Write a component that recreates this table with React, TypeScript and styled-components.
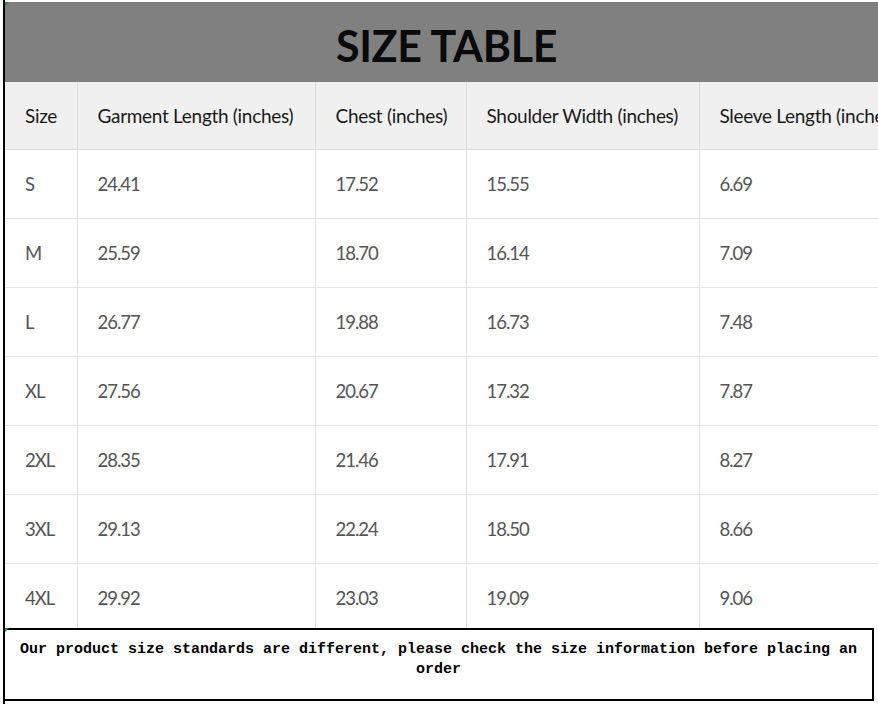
import React from 'react'
import styled, { createGlobalStyle } from 'styled-components'

const GlobalStyle = createGlobalStyle`
  html, body {
    margin: 0;
    padding: 0;
    background: #fff;
  }
`

const cellFont = `Lato, "Liberation Sans", sans-serif`

const Page = styled.div`
  width: 878px;
  height: 704px;
  overflow: hidden;
  background: #fff;
`

const Sheet = styled.div`
  position: relative;
  margin-left: 3px;
  height: 704px;
  padding-top: 2px;
  box-sizing: border-box;
  border-left: 2px solid #000;
  display: flex;
  flex-direction: column;
`

const Marker = styled.span<{ $top: number }>`
  position: absolute;
  left: 0;
  top: ${(p) => p.$top}px;
  width: 0;
  height: 0;
  border-top: 4px solid #2e8b2e;
  border-right: 4px solid transparent;
`

const TitleBar = styled.div`
  height: 80px;
  flex: none;
  background: #808080;
  display: flex;
  align-items: center;
  justify-content: center;
  padding: 6px 0 0 10px;
  box-sizing: border-box;
`

const Title = styled.h1`
  margin: 0;
  font-family: ${cellFont};
  font-weight: 700;
  font-size: 43px;
  letter-spacing: -0.3px;
  color: #0a0a0a;
`

const TableWrap = styled.div`
  height: 546px;
  flex: none;
  overflow: hidden;
`

const Table = styled.table`
  border-collapse: collapse;
  table-layout: fixed;
  width: 945px;
`

const HeadRow = styled.tr`
  height: 67px;
  background: #f0f0f0;
`

const Row = styled.tr`
  height: 69px;
  background: #fff;
`

const Th = styled.th`
  padding: 0 0 0 20px;
  text-align: left;
  white-space: nowrap;
  overflow: hidden;
  font-family: ${cellFont};
  font-weight: 400;
  font-size: 19px;
  letter-spacing: -0.3px;
  color: #1a1a1a;
  border-right: 1px solid #dcdcdc;
  border-bottom: 1px solid #dedede;
`

const Td = styled.td`
  padding: 0 0 0 20px;
  text-align: left;
  white-space: nowrap;
  font-family: ${cellFont};
  font-size: 18.5px;
  letter-spacing: -1px;
  color: #545454;
  border-right: 1px solid #e2e2e2;
  border-bottom: 1px solid #e4e4e4;
`

const Footer = styled.div`
  width: 871px;
  height: 73px;
  flex: none;
  margin-left: -2px;
  box-sizing: border-box;
  border: 2px solid #000;
  padding: 10px 10px 0;
  text-align: center;
  font-family: "Liberation Mono", "DejaVu Sans Mono", monospace;
  font-weight: 700;
  font-size: 15px;
  line-height: 20px;
  color: #000;
`

const columns = [
  { label: 'Size', width: 72 },
  { label: 'Garment Length (inches)', width: 238 },
  { label: 'Chest (inches)', width: 151 },
  { label: 'Shoulder Width (inches)', width: 233 },
  { label: 'Sleeve Length (inches)', width: 251 },
]

const rows = [
  ['S', '24.41', '17.52', '15.55', '6.69'],
  ['M', '25.59', '18.70', '16.14', '7.09'],
  ['L', '26.77', '19.88', '16.73', '7.48'],
  ['XL', '27.56', '20.67', '17.32', '7.87'],
  ['2XL', '28.35', '21.46', '17.91', '8.27'],
  ['3XL', '29.13', '22.24', '18.50', '8.66'],
  ['4XL', '29.92', '23.03', '19.09', '9.06'],
]

export default function App() {
  return (
    <Page>
      <GlobalStyle />
      <Sheet>
        <Marker $top={2} />
        <TitleBar>
          <Title>SIZE TABLE</Title>
        </TitleBar>
        <TableWrap>
          <Table>
            <colgroup>
              {columns.map((c) => (
                <col key={c.label} style={{ width: c.width }} />
              ))}
            </colgroup>
            <thead>
              <HeadRow>
                {columns.map((c) => (
                  <Th key={c.label}>{c.label}</Th>
                ))}
              </HeadRow>
            </thead>
            <tbody>
              {rows.map((r) => (
                <Row key={r[0]}>
                  {r.map((v, i) => (
                    <Td key={i}>{v}</Td>
                  ))}
                </Row>
              ))}
            </tbody>
          </Table>
        </TableWrap>
        <Marker $top={628} />
        <Footer>
          Our product size standards are different, please check the size information before placing an order
        </Footer>
      </Sheet>
    </Page>
  )
}
